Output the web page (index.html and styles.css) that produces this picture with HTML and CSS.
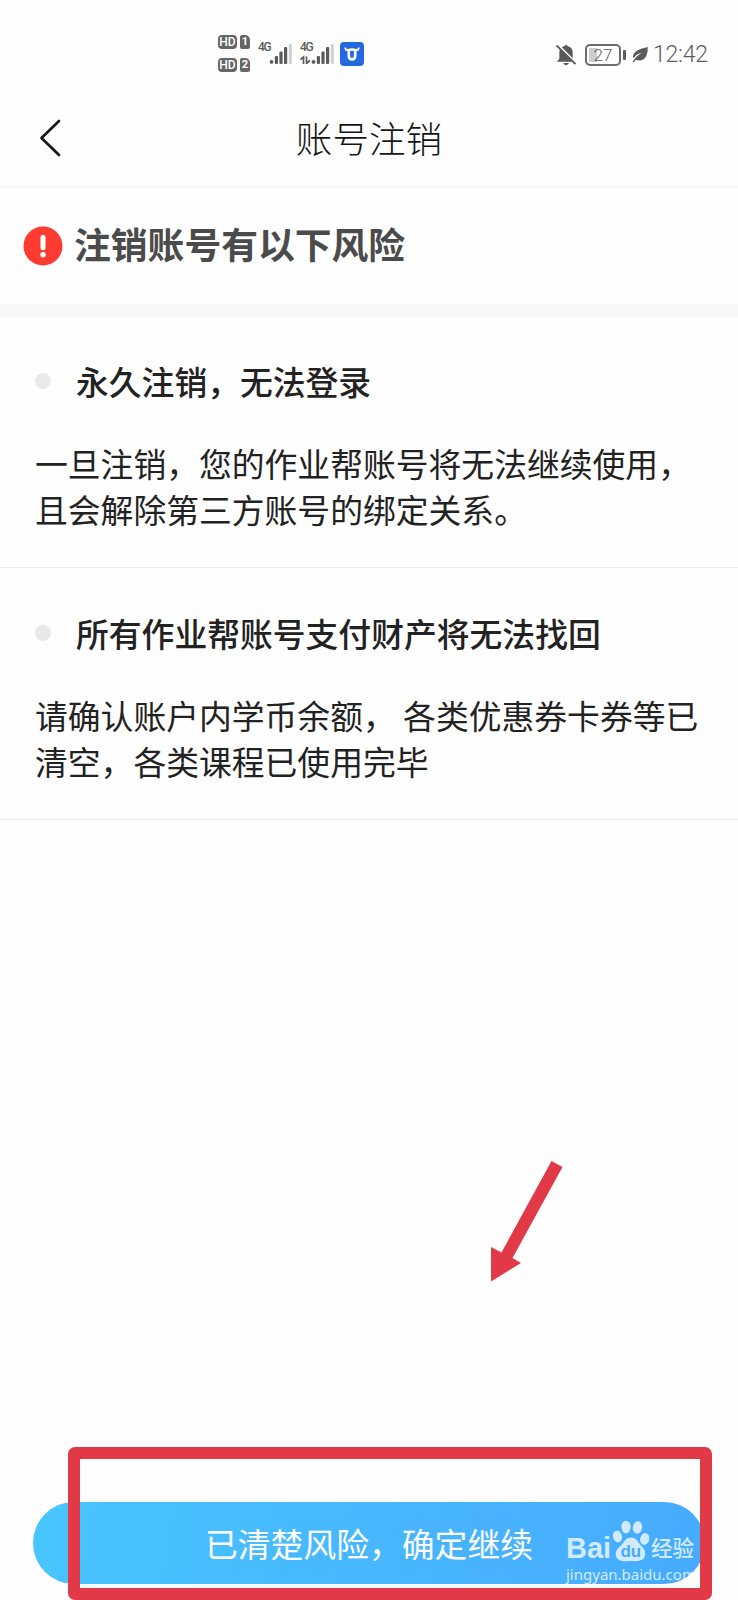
FILE: index.html
```html
<!DOCTYPE html>
<html lang="zh-CN">

<head>
    <meta charset="UTF-8">
    <meta name="viewport" content="width=device-width, initial-scale=1.0">
    <title>账号注销</title>
    <link rel="stylesheet" href="styles.css">
</head>

<body>
    <div class="page">
        <div class="status-bar">
            <div class="hd-list">
                <div class="hd-row"><span class="hd">HD</span><span class="sim">1</span></div>
                <div class="hd-row"><span class="hd">HD</span><span class="sim">2</span></div>
            </div>
            <div class="signal">
                <span class="net">4G</span>
                <svg width="34" height="21" viewBox="0 0 34 21">
                    <g fill="#5c5c5c">
                        <circle cx="13.5" cy="18.9" r="1.9" />
                        <rect x="16.8" y="13" width="3.2" height="8" rx="1" />
                        <rect x="21.4" y="8.5" width="3.2" height="12.5" rx="1" />
                        <rect x="26" y="4" width="3.2" height="17" rx="1" />
                    </g>
                    <rect x="30.8" y="1" width="3" height="20" rx="1" fill="#d0d0d0" />
                </svg>
            </div>
            <div class="signal">
                <span class="net">4G</span>
                <svg width="34" height="21" viewBox="0 0 34 21">
                    <path d="M0.5 16.5L3.5 14V21M6.5 13.5V20.5L10 17.5" fill="none" stroke="#5c5c5c" stroke-width="1.7" />
                    <g fill="#5c5c5c">
                        <circle cx="13.5" cy="18.9" r="1.9" />
                        <rect x="16.8" y="13" width="3.2" height="8" rx="1" />
                        <rect x="21.4" y="8.5" width="3.2" height="12.5" rx="1" />
                        <rect x="26" y="4" width="3.2" height="17" rx="1" />
                    </g>
                    <rect x="30.8" y="1" width="3" height="20" rx="1" fill="#d0d0d0" />
                </svg>
            </div>
            <svg class="app-icon" width="24" height="24" viewBox="0 0 24 24">
                <rect width="24" height="24" rx="4" fill="#2468df" />
                <path d="M5 5.5L6.2 8.2H9M19 5.5L17.8 8.2H15" fill="none" stroke="#fff" stroke-width="1.8" />
                <path d="M8.8 8V14Q8.8 17.4 12 17.4Q15.2 17.4 15.2 14V8Q12 7 8.8 8Z" fill="none" stroke="#fff" stroke-width="2.6" />
            </svg>

            <div class="status-right">
                <svg width="21" height="22" viewBox="0 0 22 23">
                    <path d="M1 18.5L3.5 15.5V9.5Q3.5 3.5 8.5 2.3Q10.5 0 12.5 2.3Q17.5 3.5 17.5 9.5V15.5L20 18.5Z" fill="#5a5a5a" />
                    <path d="M7.5 20H13.5Q12.8 22.2 10.5 22.2Q8.2 22.2 7.5 20Z" fill="#5a5a5a" />
                    <path d="M1.5 0.2L21.5 20.2" stroke="#fff" stroke-width="2" />
                    <path d="M0.5 1.5L20.5 21" stroke="#5a5a5a" stroke-width="2" />
                </svg>
                <div class="battery"><span class="battery-text">27</span></div>
                <span class="battery-tip"></span>
                <svg class="leaf" width="16" height="17" viewBox="0 0 16 17">
                    <path d="M15.5 0.8C14 2 11 1.8 7 3.8C2 6 0.5 9 1.3 12.2C4 8.8 7 7.4 10.5 6.3C7 8.6 3.5 10.8 0.6 15.8L2 16.3L3.8 13.8C8 15.5 12 14.2 14 10.5C15.6 7.5 16 3.5 15.5 0.8Z" fill="#5a5a5a" />
                </svg>
                <span class="time">12:42</span>
            </div>
        </div>

        <div class="header">
            <svg class="back" width="24" height="40" viewBox="0 0 24 40">
                <path d="M20 3L2.5 20L20 37" fill="none" stroke="#151515" stroke-width="2.7" stroke-linecap="round" stroke-linejoin="round" />
            </svg>
            <h1 class="header-title">账号注销</h1>
        </div>

        <div class="warning">
            <svg width="40" height="40" viewBox="0 0 40 40">
                <circle cx="20" cy="20" r="19.5" fill="#fe3b31" />
                <path d="M20 11.3V21.7" stroke="#fff" stroke-width="5" stroke-linecap="round" />
                <circle cx="20" cy="28.7" r="2.7" fill="#fff" />
            </svg>
            <h2 class="warning-title">注销账号有以下风险</h2>
        </div>

        <div class="risk">
            <h3 class="risk-title"><span class="dot"></span>永久注销，无法登录</h3>
            <p class="risk-text">一旦注销，您的作业帮账号将无法继续使用，<br>且会解除第三方账号的绑定关系。</p>
        </div>
        <div class="risk">
            <h3 class="risk-title"><span class="dot"></span>所有作业帮账号支付财产将无法找回</h3>
            <p class="risk-text">请确认账户内学币余额， 各类优惠券卡券等已<br>清空，各类课程已使用完毕</p>
        </div>

        <div class="footer">
            <button class="confirm">已清楚风险，确定继续</button>
        </div>

        <!-- Marks drawn over the page -->
        <svg class="arrow" width="74" height="124" viewBox="0 0 74 124">
            <path d="M61.5 0L72.5 6L22.5 97L31 102L1 120.5V86L11.5 91.5Z" fill="#e13a46" />
        </svg>
        <div class="frame"></div>
        <div class="watermark">
            <div class="logo">
                <span class="logo-bai">Bai</span>
                <svg width="38" height="42" viewBox="0 0 38 42">
                    <g fill="#fff">
                        <ellipse cx="5.5" cy="16.5" rx="4.5" ry="6" transform="rotate(-12 5.5 16.5)" />
                        <ellipse cx="14" cy="7" rx="4.6" ry="6.3" />
                        <ellipse cx="25.5" cy="7.5" rx="4.6" ry="6.3" transform="rotate(10 25.5 7.5)" />
                        <ellipse cx="32.7" cy="19" rx="4.5" ry="6" transform="rotate(12 32.7 19)" />
                        <path d="M19 17.5C23.5 17.5 25.5 21 28.5 25C32 28.5 34 31 32.8 36C31.5 41 26 41.5 19 41C12 41.5 5.5 41.5 4 36C3 31 5.5 28.5 9.5 25C12.5 21 14.5 17.5 19 17.5Z" />
                    </g>
                    <text class="logo-du" x="18.8" y="37" text-anchor="middle">du</text>
                </svg>
                <span class="logo-jy">经验</span>
            </div>
            <div class="site">jingyan.baidu.com</div>
        </div>
    </div>
</body>

</html>
```
FILE: styles.css
```css
* {
    box-sizing: border-box;
}

body {
    margin: 0;
    background-color: #fefefe;
    color: #222;
    font-family: "Noto Sans CJK SC", sans-serif;
}

h1,
h2,
h3,
p {
    margin: 0;
}

.page {
    position: relative;
    display: flex;
    flex-direction: column;
    width: 738px;
    height: 1600px;
    overflow: hidden;
}

/* Status bar */
.status-bar {
    display: flex;
    align-items: flex-start;
    height: 90px;
    padding: 35px 31px 0 218px;
    color: #5c5c5c;
    font-family: Roboto, sans-serif;
}

.hd-list {
    display: flex;
    flex-direction: column;
    gap: 9px;
}

.hd-row {
    display: flex;
    gap: 3px;
}

.hd,
.sim {
    height: 14px;
    border-radius: 4px;
    background-color: #666;
    color: #fff;
    font-size: 12px;
    font-weight: 500;
    line-height: 14px;
    text-align: center;
}

.hd {
    width: 19px;
}

.sim {
    width: 10px;
    border-radius: 2px 5px 2px 2px;
    font-size: 11px;
    font-weight: 700;
}

.signal {
    display: grid;
    width: 34px;
    margin: 7px 0 0 8px;
}

.signal .net,
.signal svg {
    grid-area: 1 / 1;
}

.net {
    font-size: 12px;
    font-weight: 500;
    line-height: 11px;
    letter-spacing: -1.2px;
}

.signal svg {
    margin-top: 1px;
}

.app-icon {
    margin: 7px 0 0 6px;
}

.status-right {
    display: flex;
    align-items: center;
    height: 39px;
    margin-left: auto;
}

.battery {
    display: flex;
    align-items: center;
    justify-content: center;
    width: 36px;
    height: 22px;
    margin-left: 8px;
    border: 2px solid #6c6c6c;
    border-radius: 5px;
    box-shadow: inset 0 0 0 2px #fefefe;
    background: linear-gradient(to right, #ccc 10px, transparent 10px);
}

.battery-text {
    font-size: 17px;
    font-weight: 300;
    line-height: 18px;
}

.battery-tip {
    width: 3px;
    height: 10px;
    margin-left: 2px;
    border-radius: 1px;
    background-color: #5c5c5c;
}

.leaf {
    margin: 0 5px 0 6px;
}

.time {
    width: 54px;
    font-size: 23px;
    font-weight: 300;
    letter-spacing: -0.2px;
    white-space: nowrap;
}

/* Title bar */
.header {
    display: grid;
    grid-template-columns: 80px 1fr 80px;
    align-items: center;
    height: 98px;
    border-bottom: 2px solid #f7f7f8;
}

.back {
    margin-left: 39px;
}

.header-title {
    color: #151515;
    font-size: 36.6px;
    font-weight: 300;
    line-height: 54px;
    text-align: center;
}

/* Warning */
.warning {
    display: flex;
    align-items: center;
    gap: 11px;
    height: 129px;
    padding-left: 23px;
    border-bottom: 13px solid #f7f7f9;
}

.warning-title {
    margin-bottom: 6px;
    color: #4b4b4b;
    font-size: 36.8px;
    font-weight: 700;
    line-height: 54px;
}

/* Risk list */
.risk {
    height: 251px;
    padding: 40px 0 0 35px;
    border-bottom: 1px solid #ececec;
}

.risk + .risk {
    height: 252px;
    padding-top: 41px;
}

.risk-title {
    display: flex;
    align-items: center;
    font-size: 32.8px;
    font-weight: 500;
    line-height: 48px;
}

.dot {
    width: 16px;
    height: 16px;
    margin-right: 25px;
    border-radius: 50%;
    background-color: #e9e9e9;
}

.risk-text {
    margin-top: 35px;
    font-size: 32.8px;
    line-height: 46px;
    white-space: nowrap;
}

/* Confirm button */
.footer {
    margin-top: auto;
    padding: 0 33px 16px;
}

.confirm {
    display: block;
    width: 100%;
    height: 82px;
    padding: 0;
    border: none;
    border-radius: 41px;
    background: linear-gradient(100deg, #48c5ff, #47b3ff 65%, #46abff);
    color: #fff;
    font-family: inherit;
    font-size: 32.8px;
    line-height: 48px;
}

.arrow {
    position: absolute;
    top: 1161px;
    left: 490px;
}

.frame {
    position: absolute;
    top: 1447px;
    left: 68px;
    width: 644px;
    height: 153px;
    border: 12px solid #e13a46;
    border-radius: 7px;
}

/* Watermark */
.watermark {
    position: absolute;
    top: 1520px;
    left: 566px;
    width: 134px;
    color: #fff;
    opacity: 0.75;
}

.logo {
    display: flex;
    align-items: flex-end;
    height: 42px;
}

.logo-bai {
    width: 46px;
    font-family: "Liberation Sans", sans-serif;
    font-size: 29px;
    font-weight: 700;
    line-height: 28px;
}

.logo-du {
    fill: #46a9ff;
    font-family: "Liberation Sans", sans-serif;
    font-size: 17px;
    font-weight: 700;
}

.logo-jy {
    margin: 0 0 3px 1px;
    font-size: 21.5px;
    font-weight: 500;
    line-height: 24px;
}

.site {
    margin-top: 2px;
    font-family: "Noto Sans", sans-serif;
    font-size: 15px;
    line-height: 20px;
}
```
